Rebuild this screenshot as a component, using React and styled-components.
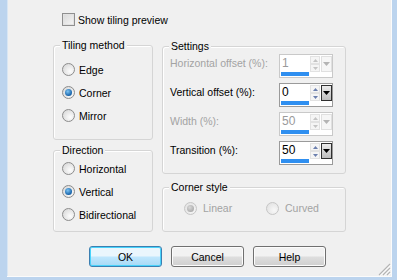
import styled, { createGlobalStyle } from "styled-components";

const GlobalStyle = createGlobalStyle`
  html, body {
    margin: 0;
    padding: 0;
    background: #f0f0f0;
  }
  body {
    font-family: "Liberation Sans", Arial, sans-serif;
    font-size: 10.5px;
    color: #000;
  }
`;

const settings = [
  { label: "Horizontal offset (%):", value: "1", disabled: true },
  { label: "Vertical offset (%):", value: "0" },
  { label: "Width (%):", value: "50", disabled: true },
  { label: "Transition (%):", value: "50" },
];

const Radio = ({ label, checked, disabled, width }) => (
  <Option $disabled={disabled} $width={width}>
    <Circle $checked={checked} $disabled={disabled} />
    {label}
  </Option>
);

const Triangle = ({ up, color, w = 5, h = 3 }) => (
  <svg width={w} height={h} viewBox={`0 0 ${w} ${h}`}>
    <polygon
      points={up ? `0,${h} ${w / 2},0 ${w},${h}` : `0,0 ${w},0 ${w / 2},${h}`}
      fill={color}
    />
  </svg>
);

const Spinner = ({ value, disabled }) => (
  <Spin $disabled={disabled}>
    <SpinTop>
      <Field $disabled={disabled}>{value}</Field>
      <Arrows>
        <ArrowHalf>
          <Triangle up color={disabled ? "#c4c4c4" : "#6b7fae"} />
        </ArrowHalf>
        <ArrowHalf>
          <Triangle color={disabled ? "#c4c4c4" : "#6b7fae"} />
        </ArrowHalf>
      </Arrows>
      <Drop $disabled={disabled}>
        <Triangle w={7} h={4} color={disabled ? "#b4b4b4" : "#000"} />
      </Drop>
    </SpinTop>
    <Bar />
  </Spin>
);

const App = () => (
  <>
    <GlobalStyle />
    <Window>
      <CheckRow>
        <CheckBox />
        Show tiling preview
      </CheckRow>
      <Columns>
        <LeftCol>
          <Group $height={95} $pad="12px 0 0 8px">
            <Legend>Tiling method</Legend>
            <Radio label="Edge" />
            <Radio label="Corner" checked />
            <Radio label="Mirror" />
          </Group>
          <Group $height={82} $pad="6px 0 0 8px">
            <Legend>Direction</Legend>
            <Radio label="Horizontal" />
            <Radio label="Vertical" checked />
            <Radio label="Bidirectional" />
          </Group>
        </LeftCol>
        <RightCol>
          <Group $height={128} $pad="7px 12px 0 7px" $gap={5}>
            <Legend>Settings</Legend>
            {settings.map((s) => (
              <Row key={s.label}>
                <RowLabel $disabled={s.disabled}>{s.label}</RowLabel>
                <Spinner value={s.value} disabled={s.disabled} />
              </Row>
            ))}
          </Group>
          <Group $height={45} $pad="12px 0 0 21px">
            <Legend>Corner style</Legend>
            <InlineRadios>
              <Radio label="Linear" checked disabled width={82} />
              <Radio label="Curved" disabled />
            </InlineRadios>
          </Group>
        </RightCol>
      </Columns>
      <Buttons>
        <Button $primary>OK</Button>
        <Button>Cancel</Button>
        <Button>Help</Button>
      </Buttons>
      <Grip width="13" height="13" viewBox="0 0 13 13">
        <path d="M12 1 L1 12 M12 5 L5 12 M12 9 L9 12" stroke="#b4b4b4" strokeWidth="1.1" />
        <path d="M12.8 2 L2 12.8 M12.8 6 L6 12.8 M12.8 10 L10 12.8" stroke="#fff" strokeWidth="0.8" />
      </Grip>
    </Window>
  </>
);

const Window = styled.div`
  position: relative;
  box-sizing: border-box;
  width: 397px;
  height: 280px;
  background: #f0f0f0;
  border-left: 7px solid #bcd4ee;
  border-right: 5px solid #bcd4ee;
  border-bottom: 3px solid #bcd4ee;
  box-shadow: inset -1px -1px 0 #fbfbfb, inset 1px 0 0 #d8e6f4;
  overflow: hidden;
`;

const CheckRow = styled.label`
  display: flex;
  align-items: center;
  gap: 3px;
  height: 13px;
  margin: 13px 0 0 55px;
`;

const CheckBox = styled.span`
  box-sizing: border-box;
  width: 13px;
  height: 13px;
  border: 1px solid #8f8f8f;
  background: linear-gradient(135deg, #d8d8d8, #f6f6f6);
  box-shadow: inset 0 0 0 1px #e2e2e2;
`;

const Columns = styled.div`
  display: flex;
  align-items: flex-start;
  gap: 9px;
  margin: 19px 0 0 46px;
`;

const LeftCol = styled.div`
  display: flex;
  flex-direction: column;
  gap: 10px;
  width: 100px;
`;

const RightCol = styled.div`
  display: flex;
  flex-direction: column;
  gap: 13px;
  width: 184px;
  padding-top: 1px;
`;

const Group = styled.div`
  position: relative;
  box-sizing: border-box;
  height: ${(p) => p.$height}px;
  padding: ${(p) => p.$pad};
  display: flex;
  flex-direction: column;
  gap: ${(p) => p.$gap || 0}px;
  border: 1px solid #d5d5d5;
  border-radius: 3px;
  box-shadow: inset 1px 1px 0 #fff;
`;

const Legend = styled.span`
  position: absolute;
  top: -8px;
  left: 6px;
  padding: 0 2px;
  line-height: 14px;
  background: #f0f0f0;
`;

const Option = styled.label`
  display: flex;
  align-items: center;
  gap: 4px;
  height: 23px;
  width: ${(p) => (p.$width ? `${p.$width}px` : "auto")};
  color: ${(p) => (p.$disabled ? "#a3a3a3" : "#000")};
`;

const Circle = styled.span`
  position: relative;
  box-sizing: border-box;
  width: 13px;
  height: 13px;
  border-radius: 50%;
  border: 1px solid ${(p) => (p.$disabled ? "#c6c6c6" : "#8c8c8c")};
  background: ${(p) =>
    p.$disabled
      ? "radial-gradient(circle at 65% 65%, #f8f8f8, #dedede)"
      : "radial-gradient(circle at 65% 65%, #fdfdfd, #d2d2d2)"};

  &::after {
    content: "";
    display: ${(p) => (p.$checked ? "block" : "none")};
    position: absolute;
    left: 2px;
    top: 2px;
    width: 7px;
    height: 7px;
    border-radius: 50%;
    background: ${(p) =>
      p.$disabled
        ? "radial-gradient(circle at 40% 35%, #d8d8d8, #9c9c9c)"
        : "radial-gradient(circle at 40% 35%, #7cc4f4, #1561a8 70%, #0d3f78)"};
  }
`;

const InlineRadios = styled.div`
  display: flex;

  & > label {
    height: 16px;
    gap: 6px;
  }
`;

const Row = styled.div`
  display: flex;
  justify-content: space-between;
  align-items: flex-start;
  height: 24px;
`;

const RowLabel = styled.span`
  padding-top: 3px;
  color: ${(p) => (p.$disabled ? "#a3a3a3" : "#000")};
`;

const Spin = styled.div`
  box-sizing: border-box;
  width: 54px;
  height: 24px;
  display: flex;
  flex-direction: column;
  border: 1px solid ${(p) => (p.$disabled ? "#c9c9c9" : "#9a9a9a")};
  background: #fff;
`;

const SpinTop = styled.div`
  display: flex;
  height: 17px;
`;

const Field = styled.span`
  width: 31px;
  padding: 2px 0 0 2px;
  box-sizing: border-box;
  font-size: 12px;
  line-height: 13px;
  color: ${(p) => (p.$disabled ? "#9a9a9a" : "#000")};
`;

const Arrows = styled.span`
  display: flex;
  flex-direction: column;
  width: 10px;
  margin-top: 1px;
  background: #f5f5f5;
`;

const ArrowHalf = styled.span`
  flex: 1;
  display: flex;
  align-items: center;
  justify-content: center;
  border: 1px solid #e2e2e2;
`;

const Drop = styled.span`
  box-sizing: border-box;
  display: flex;
  align-items: center;
  justify-content: center;
  width: 11px;
  margin: 1px 0 0 1px;
  border: 1px solid ${(p) => (p.$disabled ? "#e0e0e0" : "#303030")};
  background: ${(p) =>
    p.$disabled ? "#f6f6f6" : "linear-gradient(#ececec, #bcbcbc)"};
`;

const Bar = styled.span`
  width: 28px;
  height: 4px;
  margin: 0 0 0 1px;
  background: #2f8ff0;
`;

const Buttons = styled.div`
  display: flex;
  gap: 9px;
  margin: 14px 0 0 82px;
`;

const Button = styled.button`
  box-sizing: border-box;
  width: 73px;
  height: 21px;
  padding: 0;
  font-family: "Liberation Sans", Arial, sans-serif;
  font-size: 10.5px;
  color: #000;
  border-radius: 3px;
  border: 1px solid ${(p) => (p.$primary ? "#3c7fb1" : "#707070")};
  background: ${(p) =>
    p.$primary
      ? "linear-gradient(#eaf6fd 45%, #bee6fd 55%, #a7d9f5)"
      : "linear-gradient(#f2f2f2 45%, #dddddd 55%, #cfcfcf)"};
  box-shadow: inset 0 0 0 1px ${(p) => (p.$primary ? "#48d3fb" : "#fcfcfc")};
`;

const Grip = styled.svg`
  position: absolute;
  right: 1px;
  bottom: 1px;
`;

export default App;
